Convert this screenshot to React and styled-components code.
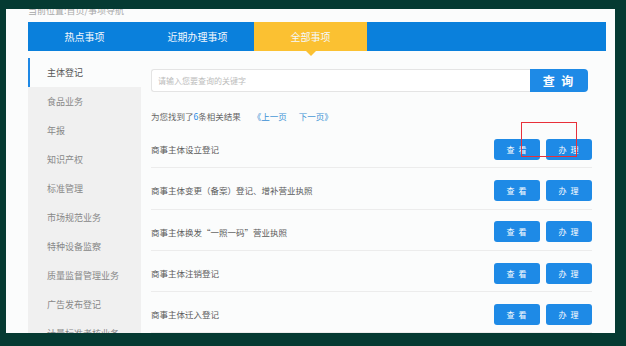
import React from "react";
import styled, { createGlobalStyle } from "styled-components";

const GlobalStyle = createGlobalStyle`
  html, body {
    margin: 0;
    padding: 0;
    background: #053a32;
    font-family: "Noto Sans CJK SC", "Noto Sans", sans-serif;
  }
`;

const menu = [
  "主体登记",
  "食品业务",
  "年报",
  "知识产权",
  "标准管理",
  "市场规范业务",
  "特种设备监察",
  "质量监督管理业务",
  "广告发布登记",
  "计量标准考核业务",
];

const items = [
  "商事主体设立登记",
  "商事主体变更（备案）登记、增补营业执照",
  "商事主体换发“一照一码”营业执照",
  "商事主体注销登记",
  "商事主体迁入登记",
];

const App = () => {
  return (
    <>
      <GlobalStyle />
      <Frame>
        <Panel>
          <Crumb>当前位置:首页/事项导航</Crumb>
          <TabBar>
            <Tab>热点事项</Tab>
            <Tab>近期办理事项</Tab>
            <Tab active>全部事项</Tab>
          </TabBar>
          <Body>
            <Sidebar>
              {menu.map((m, i) => (
                <MenuItem key={m} active={i === 0}>
                  {m}
                </MenuItem>
              ))}
            </Sidebar>
            <Main>
              <SearchRow>
                <SearchInput placeholder="请输入您要查询的关键字" />
                <SearchButton>查 询</SearchButton>
              </SearchRow>
              <ResultLine>
                为您找到了<Blue>6</Blue>条相关结果
                <Pager>《上一页</Pager>
                <Pager>下一页》</Pager>
              </ResultLine>
              {items.map((t) => (
                <Row key={t}>
                  <RowTitle>{t}</RowTitle>
                  <Actions>
                    <ActionButton>查 看</ActionButton>
                    <ActionButton>办 理</ActionButton>
                  </Actions>
                </Row>
              ))}
              <Marker />
            </Main>
          </Body>
        </Panel>
      </Frame>
    </>
  );
};

export default App;

// Styled components

const Frame = styled.div`
  box-sizing: border-box;
  width: 626px;
  height: 346px;
  padding: 9px 11px 13px 6px;
`;

const Panel = styled.div`
  box-sizing: border-box;
  height: 324px;
  background: #fbfcfc;
  padding: 0 9px 0 22px;
  overflow: hidden;
`;

const Crumb = styled.div`
  height: 13px;
  line-height: 9px;
  margin-top: -3px;
  margin-bottom: 3px;
  font-size: 9px;
  color: #a8a8a8;
`;

const TabBar = styled.div`
  display: flex;
  height: 29px;
  background: #0a80dc;
`;

const Tab = styled.div`
  position: relative;
  width: 113px;
  display: flex;
  align-items: center;
  justify-content: center;
  font-size: 10px;
  color: #f4f8fc;
  background: ${(p) => (p.active ? "#fbc132" : "transparent")};

  &::after {
    content: "";
    display: ${(p) => (p.active ? "block" : "none")};
    position: absolute;
    left: 50%;
    bottom: -5px;
    margin-left: -5px;
    border-left: 5px solid transparent;
    border-right: 5px solid transparent;
    border-top: 5px solid #fbc132;
  }
`;

const Body = styled.div`
  display: flex;
  gap: 10px;
  padding-top: 7px;
`;

const Sidebar = styled.div`
  width: 113px;
  flex-shrink: 0;
  background: #f0f0f0;
`;

const MenuItem = styled.div`
  box-sizing: border-box;
  height: 29px;
  display: flex;
  align-items: center;
  padding-left: 17px;
  font-size: 9px;
  color: ${(p) => (p.active ? "#555" : "#888")};
  background: ${(p) => (p.active ? "#fbfcfc" : "transparent")};
  border-left: 2px solid ${(p) => (p.active ? "#1e88e5" : "transparent")};
`;

const Main = styled.div`
  position: relative;
  width: 441px;
  padding-top: 11px;
`;

const SearchRow = styled.div`
  display: flex;
  height: 23px;
  width: 437px;
`;

const SearchInput = styled.input`
  box-sizing: border-box;
  flex: 1;
  height: 23px;
  border: 1px solid #e4e4e4;
  border-right: none;
  border-radius: 3px 0 0 3px;
  padding: 0 6px;
  font-family: inherit;
  font-size: 8px;
  background: #fff;
  outline: none;

  &::placeholder {
    color: #bcbcbc;
  }
`;

const SearchButton = styled.button`
  width: 58px;
  height: 23px;
  border: none;
  border-radius: 0 4px 4px 0;
  background: #1e8ae6;
  color: #fff;
  font-family: inherit;
  font-size: 12px;
  font-weight: bold;
  letter-spacing: 2px;
  padding: 0;
`;

const ResultLine = styled.div`
  height: 20px;
  line-height: 20px;
  margin-top: 14px;
  margin-bottom: 1px;
  font-size: 8.5px;
  color: #666;
`;

const Blue = styled.span`
  color: #1e88e5;
`;

const Pager = styled.span`
  color: #3a8fd4;
  margin-left: 12px;
`;

const Row = styled.div`
  box-sizing: border-box;
  height: 41.3px;
  padding-top: 4px;
  display: flex;
  align-items: center;
  justify-content: space-between;
  border-bottom: 1px solid #ececec;
`;

const RowTitle = styled.div`
  font-size: 8.5px;
  color: #5a5a5a;
`;

const Actions = styled.div`
  display: flex;
  gap: 6px;
`;

const ActionButton = styled.button`
  width: 46px;
  height: 21px;
  border: none;
  border-radius: 3px;
  background: #1e8ae6;
  color: #fff;
  font-family: inherit;
  font-size: 8px;
  letter-spacing: 1px;
  padding: 0;
`;

const Marker = styled.div`
  position: absolute;
  z-index: 2;
  left: 370px;
  top: 64px;
  width: 56px;
  height: 35px;
  border: 1px solid #e8303a;
  box-sizing: border-box;
  pointer-events: none;
`;
